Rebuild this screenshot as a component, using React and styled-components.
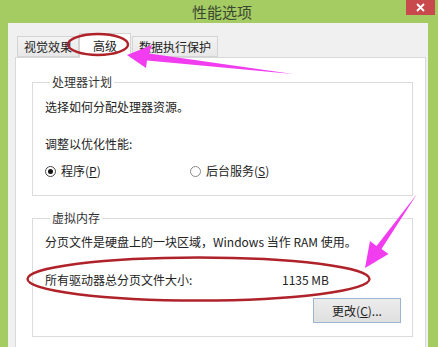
import styled, { createGlobalStyle } from "styled-components"

const GlobalStyle = createGlobalStyle`
  html, body {
    margin: 0;
    padding: 0;
    background: #a4cc63;
  }
  body {
    font-family: "Noto Sans CJK SC", "Noto Sans", sans-serif;
    font-size: 12px;
    color: #222;
  }
`

const StyledWindow = styled.div`
  position: relative;
  width: 438px;
  height: 347px;
  overflow: hidden;
  background: #a4cc63;

  display: flex;
  flex-direction: column;
`

const StyledTitleBar = styled.div`
  height: 23px;
  flex-shrink: 0;

  display: grid;
  grid-template-columns: 1fr auto 1fr;
  align-items: start;
`

const StyledTitle = styled.div`
  grid-column: 2;
  align-self: center;
  margin-left: 6px;
  font-size: 15px;
  line-height: 20px;
  color: #3a4630;
`

const StyledClose = styled.div`
  grid-column: 3;
  justify-self: end;
  margin-right: 3px;
  width: 29px;
  height: 15px;
  background: #c84a4c;

  display: flex;
  align-items: center;
  justify-content: center;
`

// 對話框主體
const StyledBody = styled.div`
  flex: 1;
  margin: 0 10px 0 8px;
  padding-top: 10px;
  background: #f0f0f0;

  display: flex;
  flex-direction: column;
  min-height: 0;
`

const StyledTabStrip = styled.div`
  position: relative;
  z-index: 1;
  margin-left: 9px;

  display: flex;
  align-items: flex-end;
`

const StyledTab = styled.div`
  box-sizing: border-box;
  height: ${p => (p.$active ? "25px" : "21px")};
  margin-bottom: ${p => (p.$active ? "-1px" : "0")};
  margin-right: ${p => (p.$active ? "1px" : "0")};
  padding: ${p => (p.$active ? "3px 13px 0" : "1px 6px 0")};
  border: 1px solid #d4d4d4;
  border-bottom: ${p => (p.$active ? "none" : "1px solid #d4d4d4")};
  background: ${p => (p.$active ? "#ffffff" : "linear-gradient(#f3f3f3, #e8e8e8)")};
  line-height: 17px;
  white-space: nowrap;
  color: #222;
`

const StyledPanel = styled.div`
  flex: 1;
  min-height: 0;
  margin: 0 2px 0 7px;
  padding: 16px 12px 0 16px;
  border: 1px solid #d9d9d9;
  border-bottom: none;
  background: #ffffff;

  display: flex;
  flex-direction: column;
  gap: 14px;
`

const StyledGroup = styled.fieldset`
  margin: 0;
  padding: 0 12px ${p => p.$bottom}px;
  border: 1px solid #dcdcdc;
  min-width: 0;

  display: flex;
  flex-direction: column;
`

const StyledLegend = styled.legend`
  margin-left: 5px;
  padding: 0 2px;
  line-height: 16px;
  color: #333;
`

const StyledText = styled.div`
  line-height: 16px;
  margin-top: ${p => p.$top}px;
  white-space: nowrap;
`

const StyledRadioRow = styled.div`
  margin-top: 11px;
  line-height: 16px;

  display: grid;
  grid-template-columns: 145px auto;
`

const StyledRadio = styled.div`
  display: flex;
  align-items: center;
  gap: 5px;
  white-space: nowrap;
`

const StyledCircle = styled.span`
  box-sizing: border-box;
  width: 11px;
  height: 11px;
  border-radius: 50%;
  border: 1px solid ${p => (p.$checked ? "#444" : "#8a8a8a")};
  background: #fff;

  display: flex;
  align-items: center;
  justify-content: center;

  &::after {
    content: '';
    display: ${p => (p.$checked ? "block" : "none")};
    width: 5px;
    height: 5px;
    border-radius: 50%;
    background: #111;
  }
`

const StyledSizeRow = styled.div`
  margin-top: 22px;
  line-height: 16px;

  display: grid;
  grid-template-columns: 237px auto;
`

const StyledButton = styled.div`
  box-sizing: border-box;
  align-self: flex-end;
  margin-top: 10px;
  margin-right: -1px;
  width: 88px;
  height: 25px;
  border: 1px solid #9bb5d3;
  background: linear-gradient(#ececec, #e0e0e0);

  display: flex;
  align-items: center;
  justify-content: center;
`

// 標註圖層
const StyledOverlay = styled.svg`
  position: absolute;
  left: 0;
  top: 0;
  z-index: 5;
  pointer-events: none;
`

const Annotations = () => (
  <StyledOverlay width="438" height="347" viewBox="0 0 438 347">
    <ellipse cx="98" cy="44.5" rx="30" ry="10.5" fill="none" stroke="#b0222a" strokeWidth="2.4" />
    <ellipse cx="198.5" cy="279" rx="171" ry="21.5" fill="none" stroke="#b0222a" strokeWidth="2.4" />
    <polygon
      points="127,55 152,45 149,53.5 293,74 147,60.5 146,68"
      fill="#f23cf0"
    />
    <polygon
      points="365,268 370,241 376.5,246 417,194 381.5,249 388.5,254"
      fill="#f23cf0"
    />
  </StyledOverlay>
)

const App = () => {
  return (
    <StyledWindow>
      <GlobalStyle />
      <StyledTitleBar>
        <StyledTitle>性能选项</StyledTitle>
        <StyledClose>
          <svg width="9" height="9" viewBox="0 0 9 9">
            <path d="M1 1L8 8M8 1L1 8" stroke="#fff" strokeWidth="1.8" />
          </svg>
        </StyledClose>
      </StyledTitleBar>
      <StyledBody>
        <StyledTabStrip>
          <StyledTab>视觉效果</StyledTab>
          <StyledTab $active>高级</StyledTab>
          <StyledTab>数据执行保护</StyledTab>
        </StyledTabStrip>
        <StyledPanel>
          <StyledGroup $bottom={16}>
            <StyledLegend>处理器计划</StyledLegend>
            <StyledText $top={9}>选择如何分配处理器资源。</StyledText>
            <StyledText $top={21}>调整以优化性能:</StyledText>
            <StyledRadioRow>
              <StyledRadio>
                <StyledCircle $checked />
                <span>程序(<u>P</u>)</span>
              </StyledRadio>
              <StyledRadio>
                <StyledCircle />
                <span>后台服务(<u>S</u>)</span>
              </StyledRadio>
            </StyledRadioRow>
          </StyledGroup>
          <StyledGroup $bottom={13}>
            <StyledLegend>虚拟内存</StyledLegend>
            <StyledText $top={8}>分页文件是硬盘上的一块区域，Windows 当作 RAM 使用。</StyledText>
            <StyledSizeRow>
              <span>所有驱动器总分页文件大小:</span>
              <span>1135 MB</span>
            </StyledSizeRow>
            <StyledButton>更改(<u>C</u>)...</StyledButton>
          </StyledGroup>
        </StyledPanel>
      </StyledBody>
      <Annotations />
    </StyledWindow>
  )
}

export default App
